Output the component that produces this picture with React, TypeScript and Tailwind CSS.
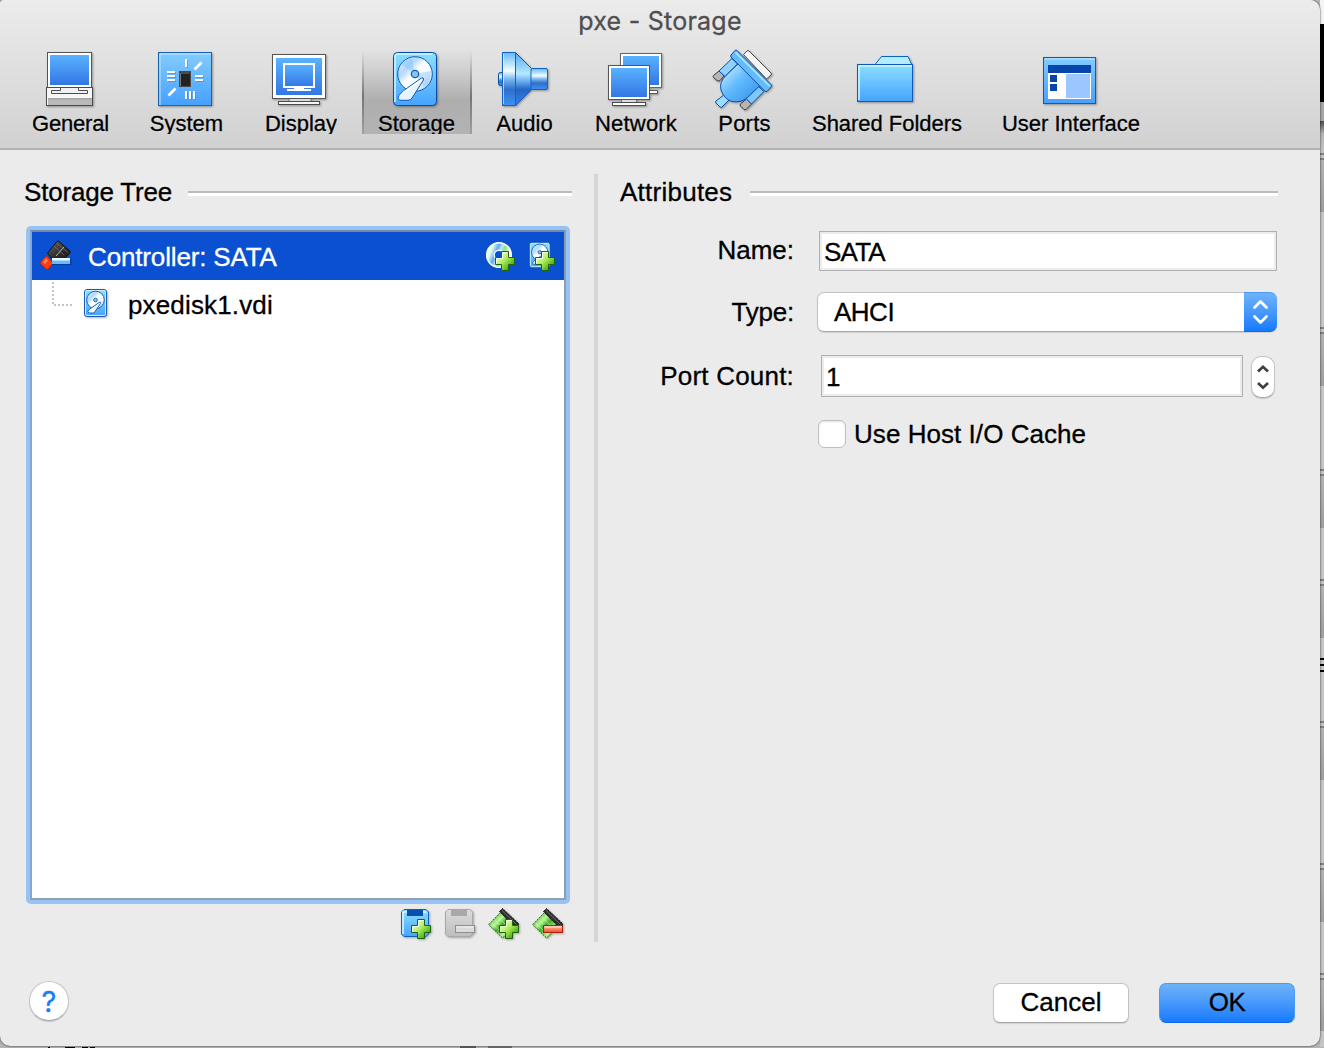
import React from "react";

const INK = "#4c4c4c";

function Defs() {
  return (
    <svg className="absolute h-0 w-0" aria-hidden="true">
      <defs>
        <linearGradient id="screen" x1="0" y1="0" x2="0" y2="1">
          <stop offset="0" stopColor="#5ab2ff" />
          <stop offset="1" stopColor="#3276e4" />
        </linearGradient>
        <linearGradient id="sky" x1="0" y1="0" x2="0" y2="1">
          <stop offset="0" stopColor="#84ccff" />
          <stop offset="1" stopColor="#46a0ff" />
        </linearGradient>
        <linearGradient id="folder" x1="0" y1="0" x2="0" y2="1">
          <stop offset="0" stopColor="#8be0ff" />
          <stop offset="1" stopColor="#46a3ff" />
        </linearGradient>
        <linearGradient id="platter" x1="0" y1="0" x2="1" y2="1">
          <stop offset="0" stopColor="#e8f4ff" />
          <stop offset="0.3" stopColor="#b2d8ff" />
          <stop offset="0.48" stopColor="#ffffff" />
          <stop offset="0.7" stopColor="#f0f8ff" />
          <stop offset="1" stopColor="#8cc4fb" />
        </linearGradient>
        <linearGradient id="horn" x1="0" y1="0" x2="0" y2="1">
          <stop offset="0" stopColor="#4fa6f5" />
          <stop offset="0.4" stopColor="#b5e9ff" />
          <stop offset="0.55" stopColor="#65aaf0" />
          <stop offset="0.7" stopColor="#2565c4" />
          <stop offset="1" stopColor="#3484ec" />
        </linearGradient>
        <linearGradient id="hornBack" x1="0" y1="0" x2="0" y2="1">
          <stop offset="0" stopColor="#62baff" />
          <stop offset="0.35" stopColor="#f4fcff" />
          <stop offset="0.5" stopColor="#7ab8ef" />
          <stop offset="0.7" stopColor="#2e70cc" />
          <stop offset="1" stopColor="#3f90f2" />
        </linearGradient>
        <linearGradient id="plug" x1="0" y1="0" x2="1" y2="1">
          <stop offset="0" stopColor="#e0f6ff" />
          <stop offset="0.45" stopColor="#66bcff" />
          <stop offset="1" stopColor="#2e8cea" />
        </linearGradient>
        <linearGradient id="plus" x1="0" y1="0" x2="1" y2="1">
          <stop offset="0.15" stopColor="#f6ffdc" />
          <stop offset="0.5" stopColor="#a6e850" />
          <stop offset="0.85" stopColor="#3fa012" />
        </linearGradient>
        <linearGradient id="chipGreen" x1="0" y1="0" x2="1" y2="1">
          <stop offset="0.15" stopColor="#5cc83a" />
          <stop offset="0.35" stopColor="#b8f49a" />
          <stop offset="0.5" stopColor="#3eae1e" />
          <stop offset="0.7" stopColor="#b4f096" />
          <stop offset="0.85" stopColor="#6ccc4c" />
        </linearGradient>
        <linearGradient id="grayBox" x1="0" y1="0" x2="0" y2="1">
          <stop offset="0" stopColor="#dcdcdc" />
          <stop offset="1" stopColor="#bdbdbd" />
        </linearGradient>
        <linearGradient id="minusRed" x1="0" y1="0" x2="0" y2="1">
          <stop offset="0" stopColor="#ffc0a8" />
          <stop offset="1" stopColor="#f04a26" />
        </linearGradient>
        <linearGradient id="jacket" x1="0" y1="0" x2="1" y2="1">
          <stop offset="0" stopColor="#6a6a6a" />
          <stop offset="0.6" stopColor="#2c2c2c" />
          <stop offset="1" stopColor="#1c1c1c" />
        </linearGradient>
        <linearGradient id="disc" x1="0" y1="0.3" x2="1" y2="0.7">
          <stop offset="0" stopColor="#e4ffe8" />
          <stop offset="0.3" stopColor="#5ea8f4" />
          <stop offset="0.48" stopColor="#c4e4ff" />
          <stop offset="0.66" stopColor="#86e68c" />
          <stop offset="1" stopColor="#ffffff" />
        </linearGradient>
      </defs>
    </svg>
  );
}

function GeneralIcon() {
  return (
    <>
      <rect x="47.5" y="52.5" width="44" height="35" fill="#fff" stroke="#555" />
      <rect x="50" y="55" width="39" height="30" fill="url(#screen)" />
      <rect x="46.5" y="87.5" width="46" height="18" fill="#f6f6f6" stroke={INK} />
      <rect x="48" y="98" width="44" height="7" fill="#b9b9b9" />
      <rect x="48" y="98" width="44" height="1.5" fill="#a5a5a5" />
      <path d="M60.5 88v2.500h-9v3h36v-3h-9V88" fill="#f2f2f2" stroke={INK} />
    </>
  );
}

function SystemIcon() {
  return (
    <>
      <rect x="158.500" y="52.500" width="53" height="53" fill="url(#sky)" stroke="#1a64b4" />
      <path d="M160 105V54h51" fill="none" stroke="#c4e6ff" />
      <path
        d="M187 60v8M168 73h8M168 77h8M168 81h8M196 77h8M196 81h8M187 92v8M191 92v8M195 92v8"
        stroke="#2c82dd"
        strokeWidth="2"
        opacity="0.500"
      />
      <g stroke="#fff" strokeWidth="2">
        <path d="M186 59v8M167 72h8M167 76h8M167 80h8M195 76h8M195 80h8M186 91v8M190 91v8M194 91v8" />
        <path d="M194.500 69.500l7-7M168.500 95.500l7-7" strokeWidth="2.800" />
      </g>
      <rect x="179.500" y="71.500" width="11" height="15" fill="#222" stroke="#4a4a4a" />
      <path d="M180.500 86V73h9" fill="none" stroke="#777" />
    </>
  );
}

function DisplayIcon() {
  return (
    <>
      <path d="M289 98h22v4h-22z" fill="#ddd" stroke="#777" />
      <rect x="278.500" y="101.500" width="41" height="3" fill="#f5f5f5" stroke={INK} />
      <rect x="272.500" y="54.500" width="53" height="44" fill="#fff" stroke="#555" />
      <rect x="276" y="58" width="46" height="37" fill="url(#screen)" />
      <rect x="284" y="64" width="30" height="23" fill="url(#screen)" stroke="#fff" strokeWidth="2" />
      <path d="M294 87h10v2h7v2h-24v-2h7z" fill="#fff" />
    </>
  );
}

function StorageIcon() {
  return (
    <>
      <rect x="393.500" y="52.500" width="43" height="53" rx="4" fill="url(#folder)" stroke="#0b4ba8" />
      <path d="M395 102V57q0-3 3-3h34" fill="none" stroke="#d2f4ff" strokeWidth="1.500" />
      <circle cx="415" cy="74" r="17.300" fill="url(#platter)" stroke="#1258b2" />
      <path d="M415 74L401 64Q406 59 412 58zM415 74L431 71Q431 82 424 87z" fill="#7ebcfa" opacity="0.400" />
      <circle cx="415" cy="74" r="3.700" fill="#7ec4f6" stroke="#1258b2" strokeWidth="1.200" />
      <path d="M421.500 78q2.500-1 2 2L412 98q-1 2-4 2.300h-8q-3-1-1-5l5-5z" fill="#e4f3ff" stroke="#1258b2" />
      <path d="M421 80L404 92l-3 4" stroke="#fff" strokeWidth="1.500" fill="none" />
    </>
  );
}

function AudioIcon() {
  return (
    <>
      <rect x="498.500" y="72.500" width="6" height="13" rx="2" fill="url(#hornBack)" stroke="#0d4ea8" />
      <path d="M515.500 52.500l16 16v21l-16 16z" fill="url(#horn)" stroke="#1659b4" />
      <path d="M502.500 52.500h13v53h-13z" fill="url(#hornBack)" stroke="#1162c4" />
      <rect x="531" y="68.500" width="16.500" height="21" rx="1.500" fill="url(#hornBack)" stroke="#1162c4" />
      <path d="M503.500 54v50" stroke="#fff" opacity="0.600" />
    </>
  );
}

function NetworkIcon() {
  return (
    <>
      <path d="M642 90.500h15.500v3H642" fill="#fff" stroke="#555" />
      <rect x="620.500" y="53.500" width="41" height="34" fill="#fff" stroke="#666" />
      <rect x="623" y="56" width="36" height="29" fill="url(#screen)" />
      <rect x="621.500" y="99.500" width="15" height="4" fill="#ddd" stroke="#777" />
      <rect x="612.500" y="102.500" width="33" height="3" fill="#fff" stroke={INK} />
      <rect x="608.500" y="65.500" width="41" height="34" fill="#fff" stroke="#555" />
      <rect x="611" y="68" width="36" height="29" fill="url(#screen)" />
    </>
  );
}

function PortsIcon() {
  return (
    <>
      <path d="M743.500 54.500l3.500-3.500q1-1 2 0l22 22q1 1 0 2L766.500 79z" fill="#f4f4f4" stroke="#4c4c4c" />
      <path d="M719 71l5 5-4 4.500q-1.500 1-3 0L713.500 77.500q-1-1 0-2z" fill="#b5b5b5" stroke="#3c3c3c" />
      <path d="M732 58.500l5.500 5.500-12.500 12.500-6-5.500z" fill="#8ed2ff" stroke="#0c50ae" />
      <path d="M746.500 99l5 5-5.500 5.500q-1 .5-2 0l-3.500-3.500q-1-1 0-2z" fill="#b5b5b5" stroke="#3c3c3c" />
      <path d="M758.500 86.500l5.500 5-12.500 12.500-5.500-5.500z" fill="#7cc8ff" stroke="#0c50ae" />
      <path d="M724.500 94.500l5 5-7.500 7.500q-1 1-2 0l-4-4q-1-1 0-2z" fill="#9edcff" stroke="#0c50ae" />
      <path d="M738.500 63.500L726 75.500Q719 82 721 90Q724 99 732 101.500Q741 103 747 98L760 85.500z" fill="url(#plug)" stroke="#0c50ae" />
      <path d="M737 50.500L771.500 85q.7 1 0 1.700L767 91.300q-1 .7-2 0L731 57q-.8-1 0-2l4-4.500q1-.8 2 0z" fill="#64bbf8" stroke="#0c50ae" />
      <path d="M735.500 52.500L769.500 86" stroke="#b9e8ff" strokeWidth="1.500" />
    </>
  );
}

function FoldersIcon() {
  return (
    <>
      <path d="M875.500 66V64l6-7.500H908l3.500 7.500v2" fill="#b4edff" stroke="#0d62c4" />
      <rect x="857.500" y="64.500" width="55" height="37" fill="url(#folder)" stroke="#0d5cbc" />
      <path d="M859 100V66h53" fill="none" stroke="#d6f6ff" strokeWidth="1.500" />
    </>
  );
}

function InterfaceIcon() {
  return (
    <>
      <rect x="1043.500" y="57.500" width="52" height="46" fill="url(#sky)" stroke="#0f5cb8" />
      <path d="M1045 59h50" stroke="#bfe6ff" />
      <rect x="1048" y="65" width="43" height="34" fill="#fff" />
      <rect x="1048" y="65" width="43" height="8" fill="#0545ac" />
      <rect x="1050" y="75" width="7" height="7" fill="#0545ac" />
      <rect x="1050" y="84" width="7" height="7" fill="#0545ac" />
      <rect x="1066" y="74" width="24" height="24" fill="#9bc6ff" />
    </>
  );
}

const tools = [
  { label: "General", box: "ml-[15px] w-[110px]", text: "translate-x-[0.5px] tracking-[-0.2px]", view: "40 50 60 60", icon: <GeneralIcon /> },
  { label: "System", box: "ml-2 w-[106px]", text: "translate-x-[0.5px]", view: "156 50 60 60", icon: <SystemIcon /> },
  { label: "Display", box: "ml-2.5 w-[104px]", text: "", view: "271 50 60 60", icon: <DisplayIcon /> },
  { label: "Storage", box: "ml-[9px] w-[110px]", text: "translate-x-[-0.5px]", view: "387 50 60 60", icon: <StorageIcon />, active: true },
  { label: "Audio", box: "ml-2 w-[90px]", text: "translate-x-[-0.5px]", view: "495 50 60 60", icon: <AudioIcon /> },
  { label: "Network", box: "ml-[9px] w-[114px]", text: "tracking-[0.2px]", view: "606 50 60 60", icon: <NetworkIcon /> },
  { label: "Ports", box: "ml-[9px] w-[86px]", text: "translate-x-[-0.5px] tracking-[0.2px]", view: "715 50 60 60", icon: <PortsIcon /> },
  { label: "Shared Folders", box: "ml-2 w-[182px]", text: "tracking-[-0.03px]", view: "857 50 60 60", icon: <FoldersIcon /> },
  { label: "User Interface", box: "ml-[9px] w-[168px]", text: "", view: "1041 50 60 60", icon: <InterfaceIcon /> },
];

function Toolbar() {
  return (
    <header className="h-[150px] border-b-2 border-[#b2b2b2] bg-linear-to-b from-[#ececec] to-[#d1d1d1]">
      <h1 className="h-[50px] text-center font-['Inter',sans-serif] text-[25px] leading-[42px] tracking-[0.25px] text-[#4f4f4f]">
        pxe - Storage
      </h1>
      <nav className="flex">
        {tools.map((t) => (
          <div
            key={t.label}
            className={
              "flex h-[84px] shrink-0 flex-col items-center " +
              t.box +
              (t.active
                ? " [background:linear-gradient(#e2e2e2,#757575_55%,#a0a0a0)_left/2px_100%_no-repeat,linear-gradient(#e2e2e2,#757575_55%,#a0a0a0)_right/2px_100%_no-repeat,linear-gradient(#e2e2e2,#cfcfcf_25%,#aeaeae_60%,#b3b3b3)]"
                : "")
            }
          >
            <svg viewBox={t.view} className="h-[60px] w-[60px] shrink-0 overflow-visible drop-shadow-[1px_1px_1px_rgba(0,0,0,0.35)]">
              {t.icon}
            </svg>
            <div className={"h-6 overflow-hidden text-[22px] leading-[27px] whitespace-nowrap [text-shadow:0_1px_0_rgba(255,255,255,0.5)] " + t.text}>
              {t.label}
            </div>
          </div>
        ))}
      </nav>
    </header>
  );
}

function Heading({ title, line, text }: { title: string; line: string; text: string }) {
  return (
    <div className="flex h-9 items-center justify-between">
      <h2 className={"text-[26px] leading-9 whitespace-nowrap " + text}>{title}</h2>
      <div className={"mt-[3px] h-[5px] border-b-3 border-white bg-[#bcbcbc] " + line} />
    </div>
  );
}

function MiniDisk() {
  return (
    <>
      <rect x="0.500" y="0.500" width="22" height="27" rx="2.500" fill="url(#folder)" stroke="#1c5db0" />
      <rect x="1.500" y="1.500" width="20" height="25" rx="1.500" fill="none" stroke="#c8eeff" />
      <circle cx="11.500" cy="11" r="8.800" fill="url(#platter)" stroke="#1c64b8" />
      <circle cx="11.500" cy="11" r="1.800" fill="#8cc8f8" stroke="#1c64b8" />
      <path d="M15 13.500q2-1 1.500 1L10 24H5q-2-1-.5-3z" fill="#eef8ff" stroke="#1c64b8" />
    </>
  );
}

function Plus() {
  return (
    <>
      <path d="M6.500.500h7v6h6v7h-6v6h-7v-6h-6v-7h6z" fill="url(#plus)" stroke="#1c6410" />
      <path d="M1.500 12.500v-5h6v-6h5" fill="none" stroke="#f4ffdc" opacity="0.900" />
    </>
  );
}

function StorageTree() {
  return (
    <div className="mt-4 h-[678px] rounded-[5px] bg-[#96c3f3] p-1">
      <div className="h-full border-2 border-t-[#7488a8] border-r-[#8f9db0] border-b-[#8fa1b6] border-l-[#86a6ca] bg-white">
        <div className="flex h-12 items-center bg-[#0a50d0] text-white">
          <svg viewBox="0 0 32 32" className="ml-2 h-8 w-8 overflow-visible">
            <path d="M7.500 13L17 1.500q1-1 2 0L30 11q.5 1 0 2l-6 6H12z" fill="url(#jacket)" stroke="#141414" />
            <path d="M14 6l10 9M17 3.500l11 9" stroke="#8a8a8a" strokeWidth="0.800" opacity="0.700" />
            <path d="M24 7l-8 9" stroke="#b5b5b5" />
            <path d="M5.500 16.500q1-1 2 0l5 6q.5 1 0 1.500L8 29q-1 1-2 0L.8 24q-1-1 0-2z" fill="#ff3c10" stroke="#b42000" />
            <path d="M3 22l3-3.500 2 2-3 3.500z" fill="#ff8a64" />
            <rect x="12" y="18" width="18" height="6" fill="#62bcff" />
            <rect x="12" y="18" width="18" height="2.500" fill="#eafaff" />
            <path d="M12 24.500h19v-6" fill="none" stroke="#083a94" />
          </svg>
          <div className="mt-0.5 ml-4 flex-1 text-[26px] leading-[30px] tracking-[-0.15px] whitespace-nowrap">Controller: SATA</div>
          <svg viewBox="0 0 32 32" className="h-8 w-8">
            <circle cx="15" cy="15" r="8.500" fill="none" stroke="url(#disc)" strokeWidth="8" />
            <circle cx="15" cy="15" r="12.300" fill="none" stroke="#fff" strokeWidth="1.500" />
            <circle cx="15" cy="15" r="4.800" fill="none" stroke="#e6f4ff" strokeWidth="1.500" />
            <g transform="translate(11 11)"><Plus /></g>
          </svg>
          <svg viewBox="0 0 32 32" className="mr-2 ml-2 h-8 w-8 overflow-visible">
            <g transform="translate(5 2) scale(0.93)"><MiniDisk /></g>
            <g transform="translate(11 11)"><Plus /></g>
          </svg>
        </div>
        <div className="flex h-12 items-center">
          <svg viewBox="0 0 24 48" className="ml-[18px] h-12 w-6">
            <path d="M3 2v23h19" fill="none" stroke="#c4c4c4" strokeWidth="2" strokeDasharray="2 2" />
          </svg>
          <svg viewBox="0 0 24 28" className="-mt-0.5 ml-2.5 h-7 w-6 overflow-visible drop-shadow-[1px_1px_1px_rgba(0,0,0,0.3)]">
            <MiniDisk />
          </svg>
          <div className="mt-0.5 ml-5 text-[26px] leading-[30px] tracking-[0.15px]">pxedisk1.vdi</div>
        </div>
      </div>
    </div>
  );
}

function Chip() {
  return (
    <>
      <path d="M.8 16.500L12.500 4.500 27 18.500 14.500 30z" fill="url(#chipGreen)" stroke="#1f6614" strokeDasharray="2 1" />
      <path d="M4 15.500l13 12M7 12.500l13 12M10 9.500l13 12" stroke="#e4ffd2" strokeWidth="0.800" opacity="0.600" />
      <path d="M11.500 3.500l3-3L31 16l-3.500 4z" fill="#2d2d2d" stroke="#161616" strokeDasharray="2 1" />
      <path d="M14 2.500l14.500 14" stroke="#6e6e6e" />
    </>
  );
}

function TreeActions() {
  const cls = "h-8 w-8 overflow-visible drop-shadow-[1px_1px_1px_rgba(0,0,0,0.3)]";
  return (
    <div className="mt-1 flex h-8 justify-end gap-3 pr-1.5">
      <svg viewBox="0 0 32 32" className={cls}>
        <path d="M4 1.500h22l2.500 2.500v22l-2.500 2.500H4L1.500 26V4z" fill="url(#folder)" stroke="#1660b8" />
        <path d="M3 26V4h23" fill="none" stroke="#e4f8ff" strokeWidth="1.500" />
        <rect x="7" y="2" width="16" height="6" fill="#064fae" />
        <g transform="translate(11 11)"><Plus /></g>
      </svg>
      <svg viewBox="0 0 32 32" className={cls}>
        <path d="M4 1.500h22l2.500 2.500v22l-2.500 2.500H4L1.500 26V4z" fill="url(#grayBox)" stroke="#a8a8a8" />
        <rect x="7" y="2" width="16" height="6" fill="#a9a9a9" />
        <rect x="11.500" y="17.500" width="19" height="7" fill="#dadada" stroke="#8f8f8f" />
        <path d="M12.500 19h17" stroke="#f2f2f2" />
      </svg>
      <svg viewBox="0 0 32 32" className={cls}>
        <Chip />
        <g transform="translate(11 11)"><Plus /></g>
      </svg>
      <svg viewBox="0 0 32 32" className={cls}>
        <Chip />
        <rect x="11.500" y="17.500" width="19" height="7" fill="url(#minusRed)" stroke="#b01e0c" />
        <path d="M12.500 19h17" stroke="#ffe4da" />
      </svg>
    </div>
  );
}

function Attributes() {
  const label = "mr-[25px] w-[174px] shrink-0 text-right text-[26px] leading-[30px] whitespace-nowrap";
  const field = "border border-[#b0b0b0] bg-white p-0.5 shadow-[inset_0_0_0_2px_#ececec] flex items-center text-[26px] leading-[30px]";
  return (
    <section className="ml-[22px] w-[658px] pt-6">
      <Heading title="Attributes" line="w-[528px]" text="tracking-[0.25px]" />
      <div className="mt-[21px] flex h-10 items-center">
        <div className={label + " -mt-0.5"}>Name:</div>
        <div className={field + " h-10 w-[458px] pt-1 pl-1 tracking-[-0.8px]"}>SATA</div>
      </div>
      <div className="mt-[21px] flex h-10 items-center">
        <div className={label + " tracking-[-0.2px]"}>Type:</div>
        <div className="-ml-0.5 flex h-10 w-[460px] rounded-[7px] shadow-[0_1px_1px_rgba(0,0,0,0.12)]">
          <div className="flex-1 rounded-l-[7px] border border-r-0 border-[#c2c2c2] border-b-[#a8a8a8] bg-white pl-4 text-[26px] leading-[39px] tracking-[-0.5px]">
            AHCI
          </div>
          <div className="flex w-[33px] rounded-r-[7px] border-y border-t-[#4a9bf4] border-b-[#1068ee] bg-linear-to-b from-[#6db3f8] to-[#147afd]">
            <svg viewBox="0 0 33 38" className="h-[38px] w-[33px]" fill="none" stroke="#fff" strokeWidth="2.800" strokeLinecap="round" strokeLinejoin="round">
              <path d="M10.500 14.500l6-6 6 6M10.500 23.500l6 6 6-6" />
            </svg>
          </div>
        </div>
      </div>
      <div className="mt-[23px] flex h-[42px] items-center">
        <div className={label + " tracking-[0.2px]"}>Port Count:</div>
        <div className={field + " ml-0.5 h-[42px] w-[422px] pt-1 pl-1"}>1</div>
        <div className="mt-0.5 ml-2 flex h-[42px] w-6 items-center justify-center rounded-[10px] border border-[#c4c4c4] border-b-[#a9a9a9] bg-white shadow-[0_1px_1px_rgba(0,0,0,0.15)]">
          <svg viewBox="0 0 24 42" className="h-[42px] w-6 shrink-0" fill="none" stroke="#404040" strokeWidth="2.700">
            <path d="M7 15.500L12 10.800l5 4.700M7 27l5 4.700 5-4.700" />
          </svg>
        </div>
      </div>
      <div className="mt-[23px] ml-[198px] flex h-7 items-center">
        <div className="h-7 w-7 rounded-[6px] border border-[#c0c0c0] bg-white shadow-[inset_0_1px_2px_rgba(0,0,0,0.12)]" />
        <div className="ml-2 text-[26px] leading-[30px] tracking-[0.05px] whitespace-nowrap">Use Host I/O Cache</div>
      </div>
    </section>
  );
}

const doubleLine = "border-y-2 border-[#808080] bg-[#c4c4c4] h-[7px]";
const shade = "bg-linear-to-b from-[#b2b2b2] to-[#9e9e9e]";
const light = "bg-[#c5c5c5]";
const strip = [
  "h-6 bg-[#f4f4f4]",
  "h-[78px] bg-black",
  "h-[19px] bg-[#a6a6a6]",
  "h-[32px] bg-linear-to-b from-[#4a4a4a] via-[#b4b4b4] via-40% to-[#c5c5c5]",
  doubleLine,
  "h-[52px] " + shade,
  "h-[115px] " + light,
  doubleLine,
  "h-[52px] " + shade,
  "h-[83px] " + light,
  doubleLine,
  "h-[52px] " + shade,
  "h-[51px] " + light,
  doubleLine,
  "h-[52px] " + shade,
  "h-[20px] " + light,
  "h-[14px] border-y-2 border-black bg-[linear-gradient(#c5c5c5_4px,#000_4px,#000_6px,#c5c5c5_6px)]",
  "h-[49px] " + light,
  doubleLine,
  "h-[52px] " + shade,
  "h-[83px] " + light,
  doubleLine,
  "h-[52px] " + shade,
  "h-[51px] " + light,
  doubleLine,
  "h-[51px] " + shade,
  "h-[16px] " + light,
];

export default function App() {
  return (
    <div className="relative flex h-[1048px] w-[1324px] overflow-hidden bg-[#b4b4b4] font-['Liberation_Sans',Arial,sans-serif] text-black [-webkit-text-stroke:0.3px]">
      <Defs />
      <div className="z-10 w-[1320px] shrink-0">
        <div className="flex h-[1046px] flex-col overflow-hidden rounded-[10px] rounded-tl-[4px] bg-[#ebebeb] shadow-[0_0_2px_rgba(0,0,0,0.9)]">
          <Toolbar />
          <main className="flex h-[792px]">
            <section className="ml-6 w-[548px] pt-6">
              <Heading title="Storage Tree" line="w-[384px]" text="tracking-[-0.2px]" />
              <div className="ml-0.5 w-[544px]">
                <StorageTree />
                <TreeActions />
              </div>
            </section>
            <div className="mt-6 ml-[22px] w-1 bg-[#d5d5d5]" />
            <Attributes />
          </main>
          <footer className="mt-[39px] flex h-[42px] items-start pr-[25px] pl-[29px]">
            <button className="h-10 w-10 rounded-full border border-[#c8c8c8] border-b-[#aaaaaa] bg-white font-['Inter',sans-serif] text-[29px] leading-[37px] text-[#147efb] shadow-[0_1px_1px_rgba(0,0,0,0.15)]">
              ?
            </button>
            <button className="mt-0.5 ml-auto h-10 w-[136px] rounded-[7px] border border-[#c4c4c4] border-b-[#a9a9a9] bg-white pb-0.5 text-[26px] leading-[36px] shadow-[0_1px_1px_rgba(0,0,0,0.12)]">
              Cancel
            </button>
            <button className="mt-0.5 ml-[30px] h-10 w-[136px] rounded-[7px] border border-[#4a9bf4] border-b-[#1068ee] bg-linear-to-b from-[#6db3f8] to-[#147afd] pb-0.5 text-[26px] leading-[36px] tracking-[-0.5px]">
              OK
            </button>
          </footer>
        </div>
        <div className="flex h-0.5 items-end">
          <div className="ml-12 h-px w-0.5 bg-black" />
          <div className="ml-[15px] h-px w-2.5 bg-black" />
          <div className="ml-[7px] h-px w-1.5 bg-black" />
          <div className="ml-0.5 h-px w-[5px] bg-black" />
          <div className="ml-[365px] h-0.5 w-4 bg-[#555]" />
          <div className="ml-3 h-0.5 w-6 bg-[#666]" />
        </div>
      </div>
      <div className="flex w-1 shrink-0 flex-col">
        {strip.map((s, i) => (
          <div key={i} className={"shrink-0 " + s} />
        ))}
      </div>
    </div>
  );
}
